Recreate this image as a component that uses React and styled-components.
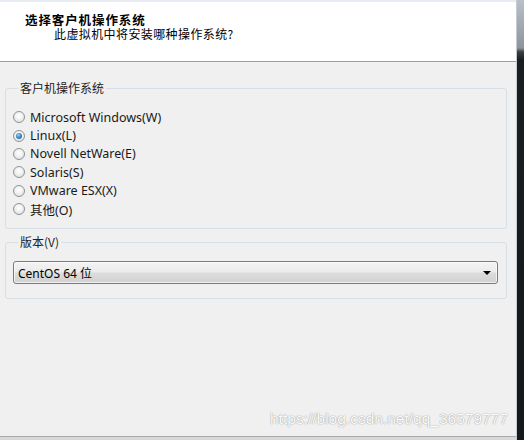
import React from "react";
import styled, { createGlobalStyle } from "styled-components";

const Global = createGlobalStyle`
  html, body { margin: 0; padding: 0; background: #1b1e21; }
  * { box-sizing: border-box; }
`;

const Screen = styled.div`
  width: 524px;
  height: 440px;
  display: flex;
  overflow: hidden;
  font-family: "Noto Sans", "Noto Sans CJK SC", sans-serif;
`;

const Dialog = styled.div`
  position: relative;
  width: 517px;
  height: 440px;
  display: flex;
  flex-direction: column;
  background: #f0f0f0;
  border-right: 1px solid #c3ccd4;
`;

const SideStrip = styled.div`
  flex: 1;
  background: linear-gradient(to bottom, #b9c0c7 0px, #8d949b 48px, #3a3e42 52px, #1b1e21 60px, #15181b 100%);
`;

const Header = styled.header`
  height: 62px;
  background: #ffffff;
  border-top: 2px solid #e6ecf2;
  border-bottom: 1px solid #a0a0a0;
  padding: 11px 0 0 25px;
  display: flex;
  flex-direction: column;
`;

const Title = styled.div`
  font-family: "Noto Sans CJK SC", sans-serif;
  font-weight: 700;
  font-size: 12.5px;
  line-height: 13px;
  height: 13px;
  letter-spacing: 0.9px;
  color: #000;
`;

const Subtitle = styled.div`
  font-family: "Noto Sans CJK SC", sans-serif;
  font-size: 12px;
  line-height: 13px;
  height: 13px;
  margin-top: 1px;
  padding-left: 29px;
  letter-spacing: 0.4px;
  color: #000;
`;

const Body = styled.main`
  flex: 1;
  display: flex;
  flex-direction: column;
  padding: 19px 9px 0 5px;
  gap: 6px;
`;

const Group = styled.fieldset`
  margin: 0;
  min-width: 0;
  border: 1px solid #d5dfe5;
  border-radius: 3px;
  padding: ${(p) => p.$pad};
`;

const Legend = styled.legend`
  font-family: "Noto Sans CJK SC", sans-serif;
  font-size: 12px;
  line-height: 14px;
  color: #222;
  padding: 0 2px;
  margin-left: 5px;
`;

const RadioList = styled.div`
  display: flex;
  flex-direction: column;
`;

const RadioRow = styled.label`
  display: flex;
  align-items: center;
  gap: 5px;
  height: 18.4px;
  font-family: "Noto Sans", "Noto Sans CJK SC", sans-serif;
  font-size: 12.5px;
  color: #1a1a1a;
`;

const RadioDot = styled.span`
  width: 12px;
  height: 12px;
  border-radius: 50%;
  border: 1px solid #8f9396;
  background: radial-gradient(circle at 50% 40%, #ffffff 0%, #f1f1f1 45%, #d4d6d8 100%);
  display: flex;
  align-items: center;
  justify-content: center;
  &::after {
    content: "";
    width: 6px;
    height: 6px;
    border-radius: 50%;
    display: ${(p) => (p.$checked ? "block" : "none")};
    background: radial-gradient(circle at 40% 35%, #9fd4f6 0%, #3c8bc7 45%, #1b4f84 100%);
  }
`;

const Select = styled.div`
  height: 23px;
  border: 1px solid #7a7a7a;
  border-radius: 3px;
  background: linear-gradient(to bottom, #f3f3f3 0%, #ebebeb 48%, #dddddd 52%, #d0d0d0 100%);
  box-shadow: inset 0 0 0 1px rgba(255, 255, 255, 0.7);
  display: flex;
  align-items: center;
  justify-content: space-between;
  padding: 0 6px 0 4px;
  font-family: "Noto Sans", "Noto Sans CJK SC", sans-serif;
  font-size: 12px;
  color: #000;
`;

const Arrow = styled.span`
  width: 0;
  height: 0;
  border-left: 4px solid transparent;
  border-right: 4px solid transparent;
  border-top: 4px solid #000;
`;

const Footer = styled.div`
  height: 4px;
  border-top: 1px solid #a8a8a8;
  background: #d8d8d8;
`;

const Watermark = styled.div`
  position: absolute;
  left: 270px;
  top: 410px;
  font-family: "Liberation Sans", Arial, sans-serif;
  font-size: 15.5px;
  color: #fbfbfb;
  text-shadow: 0 0 1px rgba(0, 0, 0, 0.4), 0 0 2px rgba(0, 0, 0, 0.15);
  white-space: nowrap;
`;

const options = [
  "Microsoft Windows(W)",
  "Linux(L)",
  "Novell NetWare(E)",
  "Solaris(S)",
  "VMware ESX(X)",
  "其他(O)",
];

export default function App() {
  return (
    <>
      <Global />
      <Screen>
        <Dialog>
          <Header>
            <Title>选择客户机操作系统</Title>
            <Subtitle>此虚拟机中将安装哪种操作系统?</Subtitle>
          </Header>
          <Body>
            <Group $pad="13px 6px 10px 7px">
              <Legend>客户机操作系统</Legend>
              <RadioList>
                {options.map((o) => (
                  <RadioRow key={o}>
                    <RadioDot $checked={o === "Linux(L)"} />
                    {o}
                  </RadioRow>
                ))}
              </RadioList>
            </Group>
            <Group $pad="12px 8px 14px 7px">
              <Legend>版本(V)</Legend>
              <Select>
                <span>CentOS 64 位</span>
                <Arrow />
              </Select>
            </Group>
          </Body>
          <Footer />
          <Watermark>https://blog.csdn.net/qq_36579777</Watermark>
        </Dialog>
        <SideStrip />
      </Screen>
    </>
  );
}
